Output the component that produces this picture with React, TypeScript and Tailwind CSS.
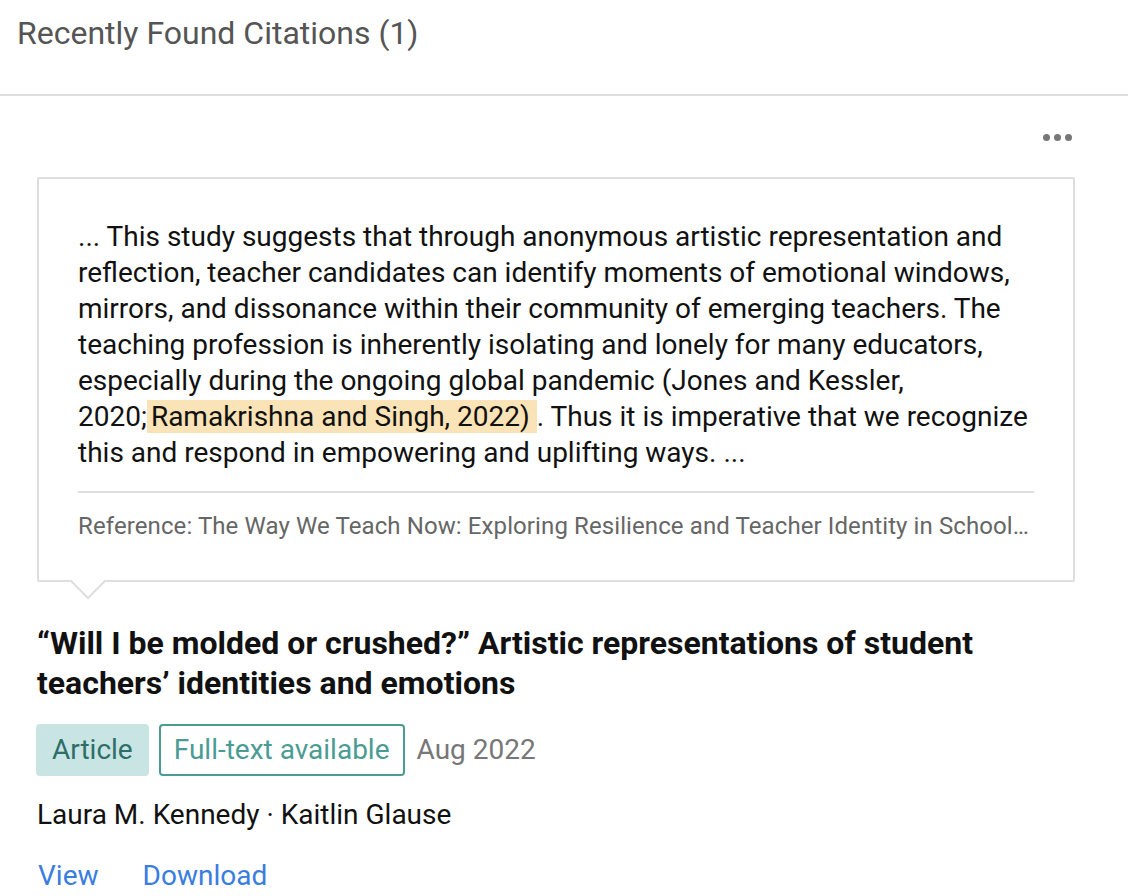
import React from 'react';

const font = { fontFamily: 'Roboto, "Liberation Sans", sans-serif' };

export default function App() {
  return (
    <div className="min-h-screen w-[1128px] bg-white text-[#111]" style={font}>
      {/* Header */}
      <div className="h-[96px] border-b-2 border-[#dedede] pl-[17px] pt-[13px]">
        <h2 className="text-[32px] leading-[40px] text-[#555]">Recently Found Citations (1)</h2>
      </div>

      <div className="pl-[37px] pr-[53px] pt-[26px]">
        <div className="flex justify-end pr-[3px]">
          <button className="flex h-[30px] items-center gap-[4px]" aria-label="More">
            <span className="h-[7px] w-[7px] rounded-full bg-[#777]" />
            <span className="h-[7px] w-[7px] rounded-full bg-[#777]" />
            <span className="h-[7px] w-[7px] rounded-full bg-[#777]" />
          </button>
        </div>

        {/* Quote card */}
        <div className="relative mt-[25px] rounded-[2px] border-2 border-[#dedede] px-[39px] pb-[40px] pt-[40px]">
          <p className="text-[28px] leading-[36px]">
            ... This study suggests that through anonymous artistic representation and reflection, teacher
            candidates can identify moments of emotional windows, mirrors, and dissonance within their community
            of emerging teachers. The teaching profession is inherently isolating and lonely for many educators,
            especially during the ongoing global pandemic (Jones and Kessler, 2020;
            <span className="bg-[#fae3b6] pl-[4px] pr-[7px]">Ramakrishna and Singh, 2022)</span>. Thus it is
            imperative that we recognize this and respond in empowering and uplifting ways. ...
          </p>
          <div className="mt-[20px] border-t-2 border-[#dedede] pt-[19px]">
            <p className="truncate text-[24px] leading-[28px] tracking-[0.1px] text-[#666]">
              Reference: The Way We Teach Now: Exploring Resilience and Teacher Identity in School Communities
              During the Pandemic
            </p>
          </div>
          <div className="absolute -bottom-[14px] left-[36px] h-[26px] w-[26px] rotate-45 border-b-2 border-r-2 border-[#dedede] bg-white" />
        </div>

        {/* Publication */}
        <h3 className="mt-[41px] text-[32px] font-bold leading-[40px] text-[#111]">
          “Will I be molded or crushed?” Artistic representations of student teachers’ identities and emotions
        </h3>

        <div className="mt-[21px] flex items-center">
          <span className="-ml-[1px] rounded-[4px] bg-[#c8e5e3] px-[16px] text-[28px] leading-[52px] text-[#2e6e69]">
            Article
          </span>
          <span className="ml-[10px] rounded-[4px] border-2 border-[#4b9b95] px-[13px] text-[28px] leading-[48px] text-[#4b9b95]">
            Full-text available
          </span>
          <span className="ml-[12px] text-[28px] leading-[52px] text-[#777]">Aug 2022</span>
        </div>

        <p className="mt-[21px] text-[28px] leading-[36px] text-[#111]">Laura M. Kennedy · Kaitlin Glause</p>

        <div className="mt-[25px] flex gap-[44px] text-[28px] leading-[36px] text-[#3a7de0]">
          <a href="#" className="pl-[1px]">View</a>
          <a href="#">Download</a>
        </div>
      </div>
    </div>
  );
}
